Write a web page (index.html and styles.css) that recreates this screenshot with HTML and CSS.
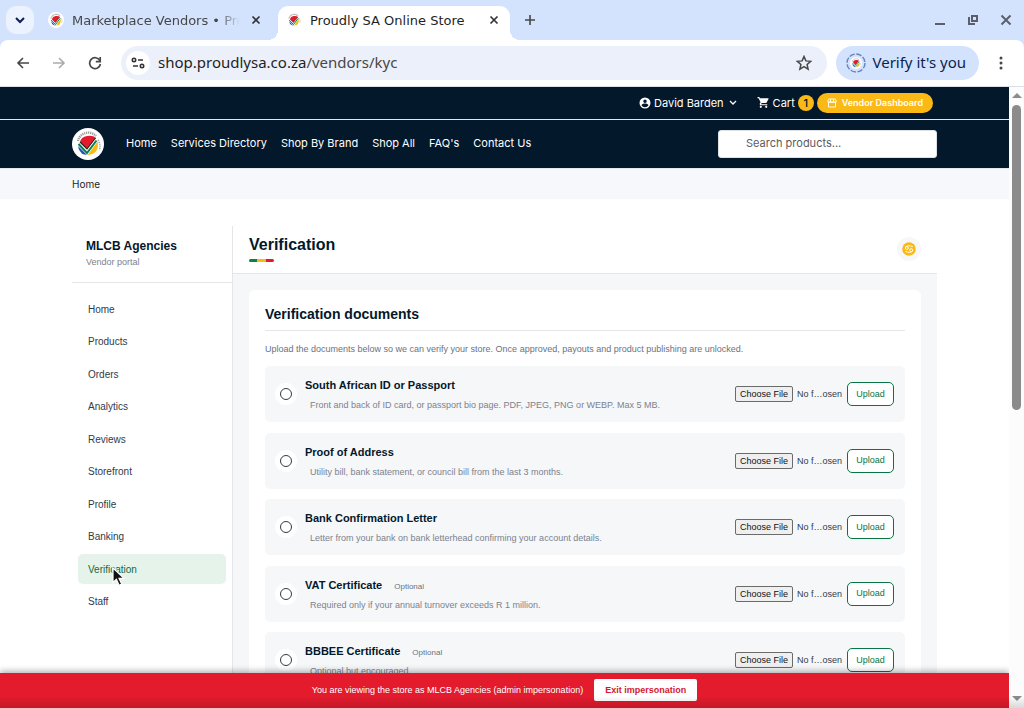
FILE: index.html
```html
<!DOCTYPE html>
<html lang="en">
<head>
<meta charset="utf-8">
<title>Proudly SA Online Store</title>
<link rel="stylesheet" href="styles.css">
</head>
<body>
<svg class="defs" aria-hidden="true">
  <symbol id="brand" viewBox="0 0 32 32">
    <circle cx="16" cy="16" r="16" fill="#fff"/>
    <path d="M6 13a10.500 10.500 0 0 1 18-5" fill="none" stroke="#9a9a9a" stroke-width="2.400" stroke-dasharray="1.2 .8"/>
    <path d="M26 12q3 5 1.500 10" fill="none" stroke="#aaa" stroke-width="1.600" stroke-dasharray="1.2 .8"/>
    <path d="M6 18l10 9-4-.5q-5-2-6-8.500z" fill="#1c55b4"/>
    <path d="M25.500 13q2.500 13-10 14z" fill="#fbb915"/>
    <path d="M8 14q1-5 7-6 6-1 9 2l-9 11z" fill="#e31b2d"/>
    <path d="M6.500 15.500l8.500 9L24.500 12" fill="none" stroke="#fff" stroke-width="3.600"/>
    <path d="M6.500 16l8.500 9L24.500 12.500" fill="none" stroke="#0a7d4b" stroke-width="2"/>
    <path d="M8 14l7 7 8.500-11" fill="none" stroke="#222" stroke-width="1.100"/>
  </symbol>
  <symbol id="close" viewBox="0 0 10 10"><path d="M1.5 1.5l7 7m0-7l-7 7" fill="none" stroke="currentColor" stroke-width="1.7"/></symbol>
</svg>

<header class="tabs">
  <button class="tab-search" aria-label="Search tabs"><svg width="10" height="7" viewBox="0 0 10 7"><path d="M1 1l4 4 4-4" fill="none" stroke="#0b1f52" stroke-width="2"/></svg></button>
  <div class="tab">
    <svg class="favicon"><use href="#brand"/></svg>
    <span class="tab-title fade">Marketplace Vendors • Pro</span>
    <button class="tab-close" aria-label="Close tab"><svg><use href="#close"/></svg></button>
  </div>
  <div class="tab active">
    <svg class="favicon"><use href="#brand"/></svg>
    <span class="tab-title">Proudly SA Online Store</span>
    <button class="tab-close" aria-label="Close tab"><svg><use href="#close"/></svg></button>
  </div>
  <button class="new-tab" aria-label="New tab"><svg width="10" height="10" viewBox="0 0 10 10"><path d="M5 0v10M0 5h10" stroke="#474747" stroke-width="1.6"/></svg></button>
  <div class="window-buttons">
    <button aria-label="Minimize"><svg width="12" height="12" viewBox="0 0 12 12"><path d="M1 10h10" stroke="#5a5f6b" stroke-width="2"/></svg></button>
    <button aria-label="Restore"><svg width="12" height="12" viewBox="0 0 12 12"><path d="M5 2h5v5H5zM2 3v7h6" fill="none" stroke="#5a5f6b" stroke-width="2"/></svg></button>
    <button aria-label="Close"><svg width="12" height="12" viewBox="0 0 12 12"><path d="M1.500 1.500l9 9m0-9l-9 9" stroke="#5a5f6b" stroke-width="2"/></svg></button>
  </div>
</header>

<div class="toolbar">
  <button class="tool" aria-label="Back"><svg viewBox="0 0 14 14"><path d="M13 7H2m5-5L2 7l5 5" fill="none" stroke="#474747" stroke-width="1.6"/></svg></button>
  <button class="tool" aria-label="Forward"><svg viewBox="0 0 14 14"><path d="M1 7h11M7 2l5 5-5 5" fill="none" stroke="#ababab" stroke-width="1.6"/></svg></button>
  <button class="tool" aria-label="Reload"><svg viewBox="0 0 14 14"><path d="M11.800 4.500A5.400 5.400 0 1 0 12.400 8" fill="none" stroke="#474747" stroke-width="1.700"/><path d="M12.200 1v4.600H7.800" fill="none" stroke="#474747" stroke-width="1.700"/></svg></button>
  <div class="address">
    <button class="site-info" aria-label="Site information"><svg width="14" height="12" viewBox="0 0 14 12"><g fill="none" stroke="#333" stroke-width="1.600"><circle cx="3" cy="3" r="1.700"/><path d="M7 3h5M2 9h5"/><circle cx="11" cy="9" r="1.700"/></g></svg></button>
    <span class="url">shop.proudlysa.co.za<span class="path">/vendors/kyc</span></span>
    <button class="star" aria-label="Bookmark"><svg width="16" height="16" viewBox="0 0 16 16"><path d="M8 1.500l1.900 4.400 4.800.4-3.600 3.200 1 4.700L8 11.700l-4.100 2.500 1-4.700L1.300 6.300l4.800-.4z" fill="none" stroke="#474747" stroke-width="1.500"/></svg></button>
  </div>
  <button class="verify"><svg width="20" height="20" viewBox="0 0 20 20"><circle cx="10" cy="10" r="9" fill="none" stroke="#6683bd" stroke-width="1.400" stroke-dasharray="5.500 1.570"/><use href="#brand" x="4" y="4" width="12" height="12"/></svg><span>Verify it's you</span></button>
  <button class="more" aria-label="Menu"><svg width="4" height="14" viewBox="0 0 4 14" fill="#474747"><circle cx="2" cy="2" r="1.500"/><circle cx="2" cy="7" r="1.500"/><circle cx="2" cy="12" r="1.500"/></svg></button>
</div>

<div class="viewport">
  <div class="page">
    <div class="topbar">
      <a class="account" href="#"><svg width="12" height="12" viewBox="0 0 24 24"><path fill="#fff" d="M12 1a11 11 0 1 0 0 22 11 11 0 0 0 0-22zm0 4a3.500 3.500 0 1 1 0 7 3.500 3.500 0 0 1 0-7zm0 15.500c-3 0-5.600-1.500-7-3.900.1-2.300 4.700-3.600 7-3.600s6.900 1.300 7 3.600a8.200 8.200 0 0 1-7 3.900z"/></svg>David Barden<svg class="caret" width="8" height="6" viewBox="0 0 8 6"><path d="M1 1l3 3 3-3" fill="none" stroke="#fff" stroke-width="1.300"/></svg></a>
      <a class="cart" href="#"><svg width="13" height="13" viewBox="0 0 24 24"><path fill="#fff" d="M7 18a2 2 0 1 0 0 4 2 2 0 0 0 0-4zM1 2v2h2l3.600 7.600-1.400 2.400C4.500 15.300 5.500 17 7 17h12v-2H7.400l1.100-2h7.500c.7 0 1.400-.4 1.700-1l3.600-6.500c.4-.7-.1-1.500-.9-1.500H5.200L4.300 2zm16 16a2 2 0 1 0 0 4 2 2 0 0 0 0-4z"/></svg>Cart<span class="count">1</span></a>
      <a class="dashboard" href="#"><svg width="10" height="10" viewBox="0 0 10 10"><path d="M1.500 4.500v4.500h7V4.500M1.500 1h7l.8 3H.7zM3.500 1v3m3-3v3M.7 4q.6 1.400 2.800 0 1.500 1.400 3 0 2.200 1.400 2.800 0" fill="none" stroke="#fff" stroke-width=".9"/></svg>Vendor Dashboard</a>
    </div>
    <div class="mainbar">
      <a class="logo" href="#" aria-label="Proudly SA"><svg width="32" height="32"><use href="#brand"/></svg></a>
      <nav class="main-nav"><a href="#">Home</a><a href="#">Services Directory</a><a href="#">Shop By Brand</a><a href="#">Shop All</a><a href="#">FAQ's</a><a href="#">Contact Us</a></nav>
      <input class="search" type="search" placeholder="Search products..." aria-label="Search products">
    </div>
    <div class="breadcrumb"><a href="#">Home</a></div>

    <div class="portal">
      <aside class="sidebar">
        <div class="vendor"><strong>MLCB Agencies</strong><span>Vendor portal</span></div>
        <nav class="side-nav">
          <a href="#">Home</a><a href="#">Products</a><a href="#">Orders</a><a href="#">Analytics</a><a href="#">Reviews</a><a href="#">Storefront</a><a href="#">Profile</a><a href="#">Banking</a>
          <a href="#" class="current">Verification<svg class="cursor" width="15" height="20" viewBox="0 0 15 20"><path d="M1 1v14.500l3.400-3.200 2.700 6 2.600-1.200-2.700-5.800h5z" fill="#111" stroke="#fff" stroke-width="1.200"/></svg></a>
          <a href="#">Staff</a>
        </nav>
      </aside>
      <main class="main">
        <div class="main-head">
          <div><h1>Verification</h1><div class="stripe"></div></div>
          <button class="avatar" aria-label="Store badge"><svg width="14" height="14" viewBox="0 0 14 14"><circle cx="7" cy="7" r="6.800" fill="#fbb915"/><g fill="none" stroke="#fff" stroke-width="1"><circle cx="4.800" cy="6" r="1.500"/><circle cx="9.200" cy="8.200" r="1.500"/><path d="M3.300 5.600Q5.500 2.500 10.700 4.600M10.700 8.600Q8.500 11.700 3.400 9.400"/></g></svg></button>
        </div>
        <section class="card">
          <h2>Verification documents</h2>
          <p class="intro">Upload the documents below so we can verify your store. Once approved, payouts and product publishing are unlocked.</p>
          <div class="docs">
            <div class="doc"><span class="status"><i></i></span><div class="info"><label for="f1">South African ID or Passport</label><p>Front and back of ID card, or passport bio page. PDF, JPEG, PNG or WEBP. Max 5 MB.</p></div><input type="file" id="f1"><button class="upload">Upload</button></div>
            <div class="doc"><span class="status"><i></i></span><div class="info"><label for="f2">Proof of Address</label><p>Utility bill, bank statement, or council bill from the last 3 months.</p></div><input type="file" id="f2"><button class="upload">Upload</button></div>
            <div class="doc"><span class="status"><i></i></span><div class="info"><label for="f3">Bank Confirmation Letter</label><p>Letter from your bank on bank letterhead confirming your account details.</p></div><input type="file" id="f3"><button class="upload">Upload</button></div>
            <div class="doc"><span class="status"><i></i></span><div class="info"><label for="f4">VAT Certificate</label><small>Optional</small><p>Required only if your annual turnover exceeds R 1 million.</p></div><input type="file" id="f4"><button class="upload">Upload</button></div>
            <div class="doc"><span class="status"><i></i></span><div class="info"><label for="f5">BBBEE Certificate</label><small>Optional</small><p>Optional but encouraged.</p></div><input type="file" id="f5"><button class="upload">Upload</button></div>
          </div>
        </section>
      </main>
    </div>
    <div class="banner"><span>You are viewing the store as MLCB Agencies (admin impersonation)</span><button>Exit impersonation</button></div>
  </div>
  <div class="scrollbar" aria-hidden="true">
    <svg width="10" height="5" viewBox="0 0 10 5"><path d="M0 5l5-5 5 5z" fill="#8b8b8b"/></svg>
    <div class="track"><div class="thumb"></div></div>
    <svg width="10" height="5" viewBox="0 0 10 5"><path d="M0 0l5 5 5-5z" fill="#8b8b8b"/></svg>
  </div>
  <div class="edge-shade"></div>
</div>
</body>
</html>
```
FILE: styles.css
```css
* { box-sizing: border-box; }
body { margin: 0; height: 100vh; display: flex; flex-direction: column; overflow: hidden; background: #d3e2fd; font-family: "Liberation Sans", Arial, sans-serif; color: #03182b; }
a { color: inherit; text-decoration: none; }
button { border: 0; padding: 0; background: none; font: inherit; color: inherit; }
svg { flex: none; display: block; }
h1, h2, p { margin: 0; }
.defs { position: absolute; width: 0; height: 0; }

.tabs { height: 40px; flex: none; display: flex; align-items: center; padding: 0 12px 0 6px; font: 13px "DejaVu Sans", sans-serif; color: #474747; }
.tab-search { width: 28px; height: 28px; border-radius: 10px; background: #ecf2fe; display: grid; place-items: center; margin-right: 6px; }
.tab { width: 238px; height: 34px; align-self: flex-end; display: flex; align-items: center; padding: 0 14px 6px 8px; }
.tab.active { background: #fff; border-radius: 10px 10px 0 0; color: #1f1f1f; width: 232px; padding-right: 8px; position: relative; }
.tab.active::before, .tab.active::after { content: ""; position: absolute; bottom: 0; width: 10px; height: 10px; }
.tab.active::before { left: -10px; background: radial-gradient(circle at 0 0, transparent 10px, #fff 10px); }
.tab.active::after { right: -10px; background: radial-gradient(circle at 100% 0, transparent 10px, #fff 10px); }
.favicon { width: 16px; height: 16px; margin-right: 8px; }
.tab-title { flex: 1; min-width: 0; white-space: nowrap; }
.fade { mask-image: linear-gradient(90deg, #000 145px, transparent 168px); }
.tab-close { width: 16px; height: 16px; display: grid; place-items: center; margin-left: 8px; color: #333; }
.tab-close svg { width: 10px; height: 10px; }
.new-tab { width: 28px; height: 28px; display: grid; place-items: center; margin-left: 6px; }
.window-buttons { margin-left: auto; display: flex; gap: 21px; }

.toolbar { height: 47px; flex: none; display: flex; align-items: center; background: #fff; border-bottom: 1px solid #dcdfe5; border-radius: 8px 8px 0 0; padding: 0 21px 0 5px; }
.tool { width: 36px; height: 34px; display: grid; place-items: center; }
.tool svg { width: 14px; height: 14px; }
.address { flex: 1; height: 34px; border-radius: 17px; background: #ecf0fa; margin: 0 9px 0 8px; padding: 0 15px 0 5px; display: flex; align-items: center; }
.site-info { width: 24px; height: 24px; border-radius: 50%; background: #fff; display: grid; place-items: center; }
.url, .verify span { font: 15px/20px "Noto Sans", sans-serif; padding-bottom: 2px; }
.url { flex: 1; margin-left: 8px; color: #1f1f1f; }
.path { color: #474747; }
.verify { height: 34px; border-radius: 17px; background: #d3e2fd; display: flex; align-items: center; gap: 6px; padding: 0 13px 0 10px; color: #0b1f52; }
.more { margin-left: 20px; }

.viewport { flex: 1; min-height: 0; display: flex; position: relative; background: #fff; }
.page { flex: 1; min-width: 0; position: relative; overflow: hidden; }
.topbar { height: 33px; background: #03182b; border-bottom: 1px solid #e4e8ee; padding: 0 76px 1px; display: flex; align-items: center; justify-content: flex-end; color: #fff; font: 11px Inter, sans-serif; }
.account, .cart { display: flex; align-items: center; gap: 3px; }
.caret { margin-left: 2px; }
.cart { margin: 0 3px 0 20px; }
.count { width: 16px; height: 16px; border-radius: 50%; background: #fbb915; color: #03182b; display: grid; place-items: center; font-weight: 500; }
.dashboard { height: 20px; border-radius: 10px; background: #fbb915; padding: 0 10px; display: flex; align-items: center; gap: 5px; font-size: 9px; font-weight: 600; }
.mainbar { height: 49px; background: #03182b; border-bottom: 1px solid #e4e8ee; padding: 0 72px; display: flex; align-items: center; color: #fff; font: 11px Inter, sans-serif; }
.main-nav { flex: 1; display: flex; gap: 14px; margin-left: 22px; padding-bottom: 2px; }
.search { width: 219px; height: 28px; border: 1px solid #dee2e6; border-radius: 3px; padding: 0 27px 2px; font: 11px Inter, sans-serif; color: #03182b; background: #fff; }
.search::placeholder { color: #595c5f; }
.breadcrumb { height: 30px; background: #f7f8fb; padding: 0 72px 1px; display: flex; align-items: center; font: 10px Inter, sans-serif; color: #212529; }

.portal { margin: 27px 72px 0; display: grid; grid-template-columns: 161px 1fr; }
.sidebar { border-right: 1px solid #e4e6ea; }
.vendor { height: 57px; border-bottom: 1px solid #e4e6ea; padding: 13px 14px 0; display: flex; flex-direction: column; gap: 3px; }
.vendor strong { font-size: 12px; line-height: 15px; }
.vendor span { font-size: 9px; line-height: 11px; color: #7b828f; }
.side-nav { height: 323px; margin: 11px 6px 0; display: flex; flex-direction: column; justify-content: space-between; font-size: 10px; color: #323b49; }
.side-nav a { height: 30px; border-radius: 5px; padding: 0 10px; display: flex; align-items: center; }
.side-nav .current { background: #e6f3ea; color: #14693f; position: relative; }
.cursor { position: absolute; left: 34px; top: 13px; }

.main { background: #f6f7f9; min-height: 520px; }
.main-head { height: 48px; background: #fff; border-bottom: 1px solid #e4e6ea; padding: 9px 16px 0; display: flex; justify-content: space-between; align-items: flex-start; }
h1 { font-size: 16px; line-height: 20px; }
.stripe { width: 25px; height: 3px; border-radius: 2px; margin-top: 4px; background: linear-gradient(90deg, #058443 33%, #fbb915 33% 67%, #e31b2d 67%); }
.avatar { width: 24px; height: 24px; border-radius: 50%; background: #f6f7f9; display: grid; place-items: center; margin-top: 2px; }
.card { margin: 16px; padding: 15px 16px 16px; background: #fff; border-radius: 6px; }
h2 { font-size: 14px; line-height: 18px; padding-bottom: 7px; border-bottom: 1px solid #e4e6ea; }
.intro { font-size: 9px; line-height: 12px; color: #6b7280; margin: 12px 0 11px; }
.docs { height: 322px; display: flex; flex-direction: column; justify-content: space-between; }
.doc { height: 56px; border-radius: 5px; background: #f6f7f9; padding: 0 11px 0 10px; display: flex; align-items: center; }
.status { width: 22px; height: 22px; border-radius: 50%; background: #fff; display: grid; place-items: center; margin-right: 8px; }
.status i { width: 12px; height: 12px; border: 1px solid #323b49; border-radius: 50%; }
.info { flex: 1; padding-bottom: 2px; }
.info label { font-size: 11px; line-height: 14px; font-weight: bold; }
.info small { font-size: 8px; color: #6b7280; margin-left: 12px; }
.info p { font-size: 9px; line-height: 12px; color: #7b828f; margin: 6px 0 0 5px; }
input[type="file"] { width: 108px; font: 9px "Liberation Sans", Arial, sans-serif; color: #323b49; margin-right: 4px; }
input[type="file"]::file-selector-button { font: inherit; height: 16px; padding: 0 4px; border: 1px solid #6b6b6b; border-radius: 2px; background: #efefef; color: #111; margin-right: 4px; }
.upload { width: 47px; height: 24px; border: 1px solid #087443; border-radius: 5px; padding-bottom: 1px; background: #fff; color: #087443; font-size: 9px; }

.banner { position: absolute; left: 0; right: 0; bottom: 0; height: 35px; padding-bottom: 2px; background: #e31b2d; color: #fff; box-shadow: 0 -2px 6px rgba(0, 0, 0, .3); display: flex; align-items: center; justify-content: center; gap: 11px; font-size: 9px; }
.banner button { height: 22px; padding: 0 11px; border-radius: 2px; background: #fff; color: #d5182b; font-weight: bold; }
.scrollbar { width: 15px; background: #fcfcfc; display: flex; flex-direction: column; align-items: center; padding: 6px 0 7px; }
.track { flex: 1; padding-top: 7px; }
.thumb { width: 9px; height: 305px; border-radius: 5px; background: #8b8b8b; }
.edge-shade { position: absolute; left: 0; right: 0; bottom: 0; height: 12px; background: linear-gradient(transparent, rgba(0, 0, 0, .14)); pointer-events: none; }
```
